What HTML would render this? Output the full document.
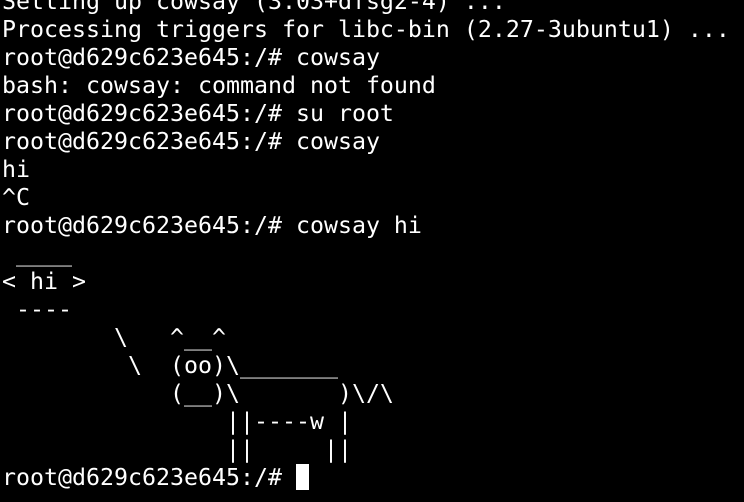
<!DOCTYPE html>
<html><head><meta charset="utf-8"><style>
html,body{margin:0;padding:0;background:#000;width:744px;height:502px;overflow:hidden}
pre{position:absolute;left:2px;top:-12px;margin:0;color:#fff;font-family:"DejaVu Sans Mono","Liberation Mono",monospace;font-size:23.25px;line-height:28px;white-space:pre}
.cur{display:inline-block;width:13px;height:26px;background:#fff;vertical-align:-5px}
</style></head><body><pre>Setting up cowsay (3.03+dfsg2-4) ...
Processing triggers for libc-bin (2.27-3ubuntu1) ...
root@d629c623e645:/# cowsay
bash: cowsay: command not found
root@d629c623e645:/# su root
root@d629c623e645:/# cowsay
hi
^C
root@d629c623e645:/# cowsay hi
 ____
&lt; hi &gt;
 ----
        \   ^__^
         \  (oo)\_______
            (__)\       )\/\
                ||----w |
                ||     ||
root@d629c623e645:/# <span class="cur"></span></pre></body></html>
